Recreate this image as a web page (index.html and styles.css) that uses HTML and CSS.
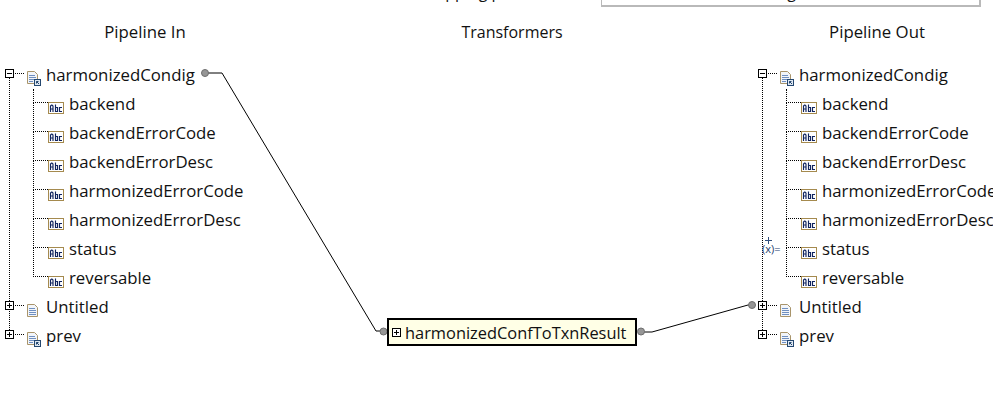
FILE: index.html
```html
<!DOCTYPE html>
<html>
<head>
    <title>Mapping</title>
    <link rel="stylesheet" href="styles.css">
</head>
<body>
    <svg width="0" height="0" class="defs">
        <symbol id="ico-plus" viewBox="0 0 9 9">
            <rect x="0.5" y="0.5" width="8" height="8" fill="#fff" stroke="#000"/>
            <path d="M2 4.5h5M4.5 2v5" stroke="#000" fill="none"/>
        </symbol>
        <symbol id="ico-minus" viewBox="0 0 9 9">
            <rect x="0.5" y="0.5" width="8" height="8" fill="#fff" stroke="#000"/>
            <path d="M2 4.5h5" stroke="#000" fill="none"/>
        </symbol>
        <symbol id="ico-doc" viewBox="0 0 11 13">
            <path d="M0.5 0.5h7l3 3v9h-10z" fill="#f2f5fa" stroke="#a9946a"/>
            <path d="M2 4.5h6M2 6.5h7M2 8.5h7M2 10.5h7" stroke="#6f8fc0" fill="none"/>
        </symbol>
        <symbol id="ico-docref" viewBox="0 0 14 15">
            <path d="M0.5 0.5h7l3 3v9h-10z" fill="#f2f5fa" stroke="#a9946a"/>
            <path d="M2 4.5h6M2 6.5h7M2 8.5h5M2 10.5h4" stroke="#6f8fc0" fill="none"/>
            <rect x="7.5" y="8.5" width="6" height="6" fill="#dfe8f2" stroke="#24476f"/>
            <path d="M9.5 10.5l2.5 2.5M9.5 10.5h2M9.5 10.5v2" stroke="#24476f" fill="none"/>
        </symbol>
        <symbol id="ico-abc" viewBox="0 0 16 12">
            <rect x="0.5" y="0.5" width="15" height="11" fill="#fff" stroke="#a58a4e"/>
            <path d="M2.5 10V4l1-1h0.5l1 1v6M2.5 7h2.5M7.500 2.500v7h2v-4h-2M14 5.500h-2.500v4h2.500" stroke="#10245f" stroke-width="1.15" fill="none"/>
        </symbol>
        <symbol id="ico-fx-plus" viewBox="0 0 7 7">
            <path d="M0 3.500h7M3.500 0v7" stroke="#33507f" fill="none"/>
        </symbol>
    </svg>

    <div class="topbar">
        <span class="topbar-label">Mapping path</span>
        <div class="topbar-field"><span class="topbar-value">Harmonized Txn Handling</span></div>
    </div>

    <div class="mapper">
        <svg class="wires" width="993" height="400">
            <path d="M208 73H222L376 331H381" />
            <path d="M644 332H652L748 305H753" />
            <circle cx="205" cy="73" r="3.500"/>
            <circle cx="383.500" cy="331.500" r="3.500"/>
            <circle cx="641" cy="331.500" r="3.500"/>
            <circle cx="752" cy="305" r="3.500"/>
        </svg>

        <section class="col col-in">
            <h2 class="col-title">Pipeline In</h2>
            <ul class="tree">
                <li class="node open">
                    <div class="row"><svg class="toggle"><use href="#ico-minus"/></svg><svg class="ico-doc"><use href="#ico-docref"/></svg><span>harmonizedCondig</span></div>
                    <ul class="fields">
                        <li class="row"><svg class="ico-abc"><use href="#ico-abc"/></svg><span>backend</span></li>
                        <li class="row"><svg class="ico-abc"><use href="#ico-abc"/></svg><span>backendErrorCode</span></li>
                        <li class="row"><svg class="ico-abc"><use href="#ico-abc"/></svg><span>backendErrorDesc</span></li>
                        <li class="row"><svg class="ico-abc"><use href="#ico-abc"/></svg><span>harmonizedErrorCode</span></li>
                        <li class="row"><svg class="ico-abc"><use href="#ico-abc"/></svg><span>harmonizedErrorDesc</span></li>
                        <li class="row"><svg class="ico-abc"><use href="#ico-abc"/></svg><span>status</span></li>
                        <li class="row"><svg class="ico-abc"><use href="#ico-abc"/></svg><span>reversable</span></li>
                    </ul>
                </li>
                <li class="node">
                    <div class="row"><svg class="toggle"><use href="#ico-plus"/></svg><svg class="ico-page"><use href="#ico-doc"/></svg><span>Untitled</span></div>
                </li>
                <li class="node">
                    <div class="row"><svg class="toggle"><use href="#ico-plus"/></svg><svg class="ico-doc"><use href="#ico-docref"/></svg><span>prev</span></div>
                </li>
            </ul>
        </section>

        <section class="col col-mid">
            <h2 class="col-title">Transformers</h2>
            <div class="transformer">
                <svg class="toggle-small"><use href="#ico-plus"/></svg>
                <span>harmonizedConfToTxnResult</span>
            </div>
        </section>

        <section class="col col-out">
            <h2 class="col-title">Pipeline Out</h2>
            <ul class="tree">
                <li class="node open">
                    <div class="row"><svg class="toggle"><use href="#ico-minus"/></svg><svg class="ico-doc"><use href="#ico-docref"/></svg><span>harmonizedCondig</span></div>
                    <ul class="fields">
                        <li class="row"><svg class="ico-abc"><use href="#ico-abc"/></svg><span>backend</span></li>
                        <li class="row"><svg class="ico-abc"><use href="#ico-abc"/></svg><span>backendErrorCode</span></li>
                        <li class="row"><svg class="ico-abc"><use href="#ico-abc"/></svg><span>backendErrorDesc</span></li>
                        <li class="row"><svg class="ico-abc"><use href="#ico-abc"/></svg><span>harmonizedErrorCode</span></li>
                        <li class="row"><svg class="ico-abc"><use href="#ico-abc"/></svg><span>harmonizedErrorDesc</span></li>
                        <li class="row">
                            <svg class="fx-plus"><use href="#ico-fx-plus"/></svg>
                            <span class="fx">(x)=</span>
                            <svg class="ico-abc"><use href="#ico-abc"/></svg><span>status</span>
                        </li>
                        <li class="row"><svg class="ico-abc"><use href="#ico-abc"/></svg><span>reversable</span></li>
                    </ul>
                </li>
                <li class="node">
                    <div class="row"><svg class="toggle"><use href="#ico-plus"/></svg><svg class="ico-page"><use href="#ico-doc"/></svg><span>Untitled</span></div>
                </li>
                <li class="node">
                    <div class="row"><svg class="toggle"><use href="#ico-plus"/></svg><svg class="ico-doc"><use href="#ico-docref"/></svg><span>prev</span></div>
                </li>
            </ul>
        </section>
    </div>
</body>
</html>
```

FILE: styles.css
```css
html, body {
    margin: 0;
    height: 400px;
    overflow: hidden;
    background: #fff;
}

body {
    font-family: "Open Sans", sans-serif;
    font-size: 16.8px;
    color: #111;
}

.defs {
    display: block;
}

/* cut off by the top of the window, only descenders are left */
.topbar {
    height: 8px;
    display: flex;
    align-items: flex-start;
    overflow: hidden;
}

.topbar-label {
    margin-left: 422px;
    margin-top: -19px;
    width: 179px;
    font-size: 16px;
    line-height: 22px;
    white-space: nowrap;
}

.topbar-field {
    width: 380px;
    height: 7px;
    box-sizing: border-box;
    border: 2px solid #b9b9b9;
    border-top: none;
    border-left-width: 1px;
    overflow: hidden;
}

.topbar-value {
    display: block;
    margin-top: -19px;
    font-size: 16px;
    line-height: 22px;
    white-space: nowrap;
}

.mapper {
    position: relative;
    display: flex;
    width: 993px;
    height: 392px;
    overflow: hidden;
}

.wires {
    position: absolute;
    left: 0;
    top: -8px;
}

.wires path {
    fill: none;
    stroke: #000;
}

.wires circle {
    fill: #969696;
    stroke: #6e6e6e;
}

.col-title {
    margin: 0;
    font-size: 16.8px;
    font-weight: 400;
    line-height: 22px;
    padding-top: 13px;
    height: 52px;
    box-sizing: border-box;
    text-align: center;
    white-space: nowrap;
}

.col-in {
    width: 290px;
}

.col-mid {
    width: 463px;
    position: relative;
}

.col-mid .col-title {
    padding-right: 19px;
    font-size: 16px;
}

.col-out {
    flex: 1;
    min-width: 0;
}

.col-out .col-title {
    padding-left: 8px;
}

ul {
    list-style: none;
    margin: 0;
    padding: 0;
}

.tree {
    padding-left: 5px;
    white-space: nowrap;
}

.row {
    position: relative;
    display: flex;
    align-items: center;
    height: 29px;
    line-height: 31px;
}

.node {
    position: relative;
}

/* dotted guide between the top level toggles */
.node:not(:last-child)::before {
    content: "";
    position: absolute;
    left: 4px;
    top: 15px;
    bottom: -15px;
    border-left: 1px dotted #000;
}

.toggle {
    position: relative;
    width: 9px;
    height: 9px;
    margin-top: -3px;
    flex: none;
}

.node > .row::after {
    content: "";
    position: absolute;
    left: 10px;
    top: 13px;
    width: 9px;
    border-top: 1px dotted #000;
}

.ico-doc {
    width: 14px;
    height: 15px;
    margin: 7px 5px 0 13px;
    flex: none;
}

.ico-page {
    width: 11px;
    height: 13px;
    margin: 7px 8px 0 13px;
    flex: none;
}

.fields {
    position: relative;
    margin-left: 28px;
}

.fields .row {
    padding-left: 15px;
}

.fields .row::before {
    content: "";
    position: absolute;
    left: 0;
    top: -15px;
    height: 28px;
    width: 14px;
    border-left: 1px dotted #000;
    border-bottom: 1px dotted #000;
}

.fields .row:first-child::before {
    top: 0;
    height: 13px;
}

.ico-abc {
    position: relative;
    width: 16px;
    height: 12px;
    margin-right: 5px;
    margin-top: 9px;
    flex: none;
}

.fx {
    position: absolute;
    left: -24px;
    top: 8px;
    font-size: 11px;
    line-height: 14px;
    color: #24406f;
}

.fx-plus {
    position: absolute;
    left: -21px;
    top: 3px;
    width: 7px;
    height: 7px;
}

.transformer {
    position: absolute;
    left: 97px;
    top: 310px;
    width: 250px;
    height: 28px;
    box-sizing: border-box;
    display: flex;
    align-items: center;
    padding-left: 3px;
    border: 2px solid #000;
    background: #ffffe6;
    font-size: 16.4px;
    white-space: nowrap;
}

.toggle-small {
    width: 9px;
    height: 9px;
    margin-right: 4px;
    flex: none;
}
```
